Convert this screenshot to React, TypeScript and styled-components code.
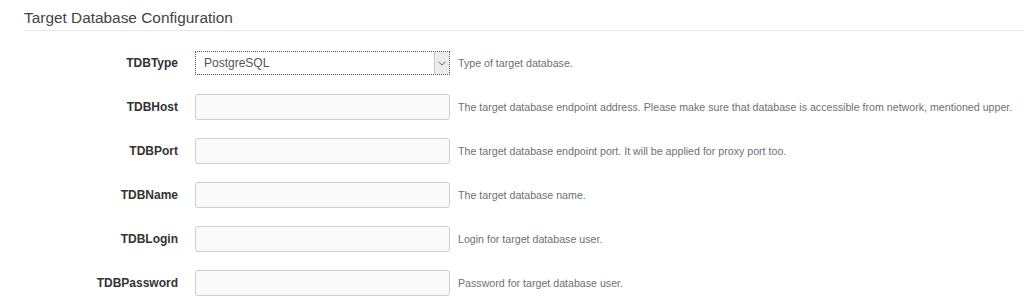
import React from "react";
import styled, { createGlobalStyle } from "styled-components";

const GlobalStyle = createGlobalStyle`
  html, body {
    margin: 0;
    padding: 0;
    background: #fff;
    font-family: "Liberation Sans", Arial, sans-serif;
  }
`;

interface Field {
  name: string;
  help: string;
  value?: string;
}

const fields: Field[] = [
  { name: "TDBType", help: "Type of target database.", value: "PostgreSQL" },
  {
    name: "TDBHost",
    help: "The target database endpoint address. Please make sure that database is accessible from network, mentioned upper.",
  },
  {
    name: "TDBPort",
    help: "The target database endpoint port. It will be applied for proxy port too.",
  },
  { name: "TDBName", help: "The target database name." },
  { name: "TDBLogin", help: "Login for target database user." },
  { name: "TDBPassword", help: "Password for target database user." },
];

const Page = styled.div`
  padding-left: 24px;
`;

const SectionTitle = styled.h2`
  margin: 0;
  padding: 9px 0 3px;
  font-size: 15.4px;
  line-height: 18px;
  font-weight: normal;
  color: #444;
  border-bottom: 1px solid #e6e6e6;
`;

const Form = styled.div`
  display: grid;
  grid-template-columns: 171px 255px 1fr;
  row-gap: 18px;
  padding-top: 19px;
  align-items: center;
`;

const Label = styled.label`
  box-sizing: border-box;
  padding-right: 17px;
  font-size: 12px;
  font-weight: bold;
  color: #333;
  text-align: right;
  line-height: 26px;
`;

const TextInput = styled.input`
  box-sizing: border-box;
  width: 255px;
  height: 26px;
  margin: 0;
  border: 1px solid #cfcfcf;
  border-radius: 3px;
  background: #fafafa;
  padding: 0 8px;
  font-size: 12px;
  outline: none;
`;

const SelectBox = styled.div`
  box-sizing: border-box;
  width: 255px;
  height: 24px;
  display: flex;
  align-items: stretch;
  border: 1px dotted #555;
  background: #fff;
`;

const SelectValue = styled.span`
  flex: 1;
  padding-left: 8px;
  font-size: 12px;
  line-height: 22px;
  color: #555;
`;

const ArrowBox = styled.span`
  width: 14px;
  display: flex;
  align-items: center;
  justify-content: center;
  background: #ececec;
  border-left: 1px solid #c8c8c8;
`;

const Help = styled.span`
  padding-left: 8px;
  font-size: 10.65px;
  color: #707070;
  white-space: nowrap;
`;

const Chevron = () => (
  <svg width="8" height="5" viewBox="0 0 8 5">
    <path d="M0.5 0.8 L4 4 L7.5 0.8" fill="none" stroke="#666" strokeWidth="1" />
  </svg>
);

export default function App() {
  return (
    <Page>
      <GlobalStyle />
      <SectionTitle>Target Database Configuration</SectionTitle>
      <Form>
        {fields.map((f) => (
          <React.Fragment key={f.name}>
            <Label>{f.name}</Label>
            {f.value ? (
              <SelectBox>
                <SelectValue>{f.value}</SelectValue>
                <ArrowBox>
                  <Chevron />
                </ArrowBox>
              </SelectBox>
            ) : (
              <TextInput type={f.name === "TDBPassword" ? "password" : "text"} />
            )}
            <Help>{f.help}</Help>
          </React.Fragment>
        ))}
      </Form>
    </Page>
  );
}
